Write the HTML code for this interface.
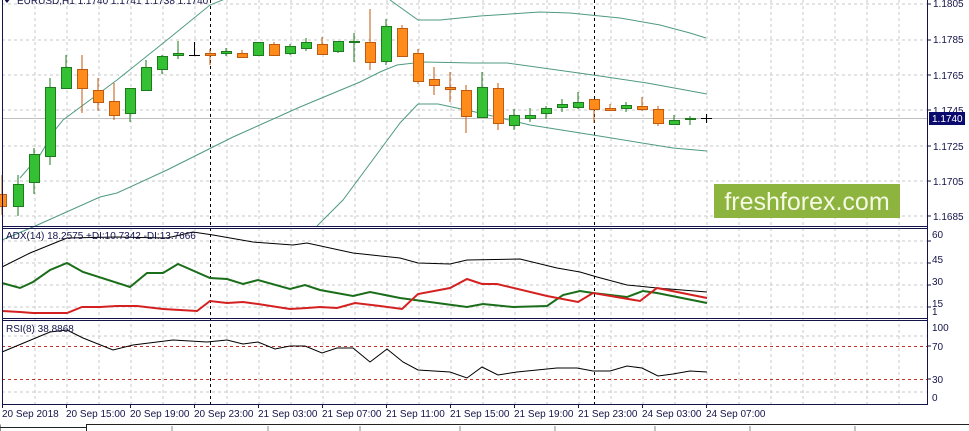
<!DOCTYPE html>
<html><head><meta charset="utf-8"><style>
html,body{margin:0;padding:0;background:#fff;width:969px;height:431px;overflow:hidden}
svg{display:block}
text{font-family:"Liberation Sans",sans-serif;font-size:10px;fill:#14144a}
</style></head><body>
<svg width="969" height="431" viewBox="0 0 969 431" xmlns="http://www.w3.org/2000/svg">
<rect width="969" height="431" fill="#fff"/>
<!-- grid verticals -->
<g stroke="#c8c8c8" stroke-dasharray="3,3" stroke-width="1">
<path d="M35 0V404M67 0V404M99 0V404M131 0V404M163 0V404M195 0V404M227 0V404M259 0V404M291 0V404M323 0V404M355 0V404M387 0V404M419 0V404M451 0V404M483 0V404M515 0V404M547 0V404M579 0V404M611 0V404M643 0V404M675 0V404M707 0V404M739 0V404M771 0V404M803 0V404M835 0V404M867 0V404M899 0V404"/>
<path d="M2 4H927M2 40H927M2 75H927M2 110H927M2 146H927M2 181H927M2 216H927M2 241H927M2 263H927M2 285H927M2 307H927M2 336H927M2 392H927"/>
</g>
<line x1="2" y1="118.5" x2="927" y2="118.5" stroke="#c0c0c0"/>
<!-- RSI levels -->
<g stroke="#c0302a" stroke-dasharray="3,3"><path d="M2 346.5H927M2 379.5H927"/></g>
<!-- vertical black separators -->
<g stroke="#000" stroke-dasharray="3,3"><path d="M210.5 0V404M594.5 0V404"/></g>
<!-- bollinger -->
<g fill="none" stroke="#4f9a80" stroke-width="1">
<polyline points="20,178 40,155 55,130 63,120 117,80 167,40 210,5 230,-3"/>
<polyline points="390,0 418,20 440,20 480,16 540,12 570,13 620,18 660,25 690,33 706,38"/>
<polyline points="2,240 33,227 100,197 117,193 167,170 233,137 300,107 360,82 380,72 397,65 423,62 473,63 507,63 593,75 647,83 707,94"/>
<polyline points="317,226 343,200 400,123 418,104 438,104 480,113 530,125 593,135 673,148 707,151"/>
</g>
<!-- candles -->
<g stroke-width="1">
<g stroke="#1d7a1d" fill="#33c033">
<path d="M18 175V216M34 148V194M50 78V165M66 55V88M130 88V122M146 60V90M162 55V74M178 41V59M226 48V56M258 42V56M290 44V55M306 38V51M338 41V53M354 33V62M386 19V65M482 72V117M514 109V130M530 108V122M546 106V119M562 99V112M578 92V109M626 102V112M674 115V125M690 116V125"/>
<rect x="13.5" y="184.5" width="10" height="22"/><rect x="29.5" y="154.5" width="10" height="28"/><rect x="45.5" y="87.5" width="10" height="69"/><rect x="61.5" y="67.5" width="10" height="21"/><rect x="125.5" y="88.5" width="10" height="25"/><rect x="141.5" y="67.5" width="10" height="23"/><rect x="157.5" y="56.5" width="10" height="13"/><rect x="173.5" y="53.5" width="10" height="2"/><rect x="221.5" y="51.5" width="10" height="2"/><rect x="253.5" y="42.5" width="10" height="13"/><rect x="285.5" y="46.5" width="10" height="7"/><rect x="301.5" y="42.5" width="10" height="6"/><rect x="333.5" y="41.5" width="10" height="10"/><rect x="349.5" y="41.5" width="10" height="1"/><rect x="381.5" y="26.5" width="10" height="35"/><rect x="477.5" y="87.5" width="10" height="30"/><rect x="509.5" y="115.5" width="10" height="10"/><rect x="525.5" y="115.5" width="10" height="3"/><rect x="541.5" y="108.5" width="10" height="5"/><rect x="557.5" y="104.5" width="10" height="3"/><rect x="573.5" y="102.5" width="10" height="5"/><rect x="621.5" y="105.5" width="10" height="3"/><rect x="669.5" y="120.5" width="10" height="4"/><rect x="685.5" y="118.5" width="10" height="1"/>
</g>
<g stroke="#c05a10" fill="#ff8c1a">
<path d="M2 175V215M82 55V113M98 78V111M114 83V120M210 49V65M242 50V58M274 42V56M322 37V55M370 9V70M402 25V57M418 49V84M434 67V95M450 72V102M466 85V133M498 83V130M594 99V123M610 104V111M642 97V111M658 106V126"/>
<rect x="-2.5" y="194.5" width="9" height="12"/><rect x="77.5" y="69.5" width="10" height="19"/><rect x="93.5" y="90.5" width="10" height="12"/><rect x="109.5" y="101.5" width="10" height="14"/><rect x="205.5" y="53.5" width="10" height="2"/><rect x="237.5" y="53.5" width="10" height="4"/><rect x="269.5" y="44.5" width="10" height="11"/><rect x="317.5" y="44.5" width="10" height="10"/><rect x="365.5" y="42.5" width="10" height="20"/><rect x="397.5" y="28.5" width="10" height="28"/><rect x="413.5" y="53.5" width="10" height="28"/><rect x="429.5" y="79.5" width="10" height="6"/><rect x="445.5" y="87.5" width="10" height="2"/><rect x="461.5" y="90.5" width="10" height="26"/><rect x="493.5" y="88.5" width="10" height="35"/><rect x="589.5" y="99.5" width="10" height="10"/><rect x="605.5" y="108.5" width="10" height="2"/><rect x="637.5" y="106.5" width="10" height="3"/><rect x="653.5" y="109.5" width="10" height="14"/>
</g>
<path d="M194.5 42V55.5M189 55.5H200M706.5 114V123M701 118.5H712" stroke="#000"/>
</g>
<!-- logo -->
<rect x="714" y="184" width="186" height="34" fill="#8db43e"/>
<text x="807" y="210" text-anchor="middle" style="font-size:25px;fill:#f6f9e4">freshforex.com</text>
<!-- legend -->
<path d="M3 -2L11 -2L7 3Z" fill="#14144a"/>
<text x="17" y="4">EURUSD,H1  1.1740 1.1741 1.1738 1.1740</text>
<!-- ADX lines -->
<g fill="none">
<polyline stroke="#000" stroke-width="1" points="2,267 30,253 67,238 117,237 167,238 193,232 213,235 253,242 293,245 307,243 353,253 400,258 418,263 450,264 467,260 520,259 557,268 580,272 597,277 627,285 657,288 707,292"/>
<polyline stroke="#1a6e1a" stroke-width="2" points="2,283 20,288 33,282 50,270 67,263 83,272 130,287 147,273 163,273 178,264 210,278 227,279 243,284 258,280 290,289 305,285 320,290 353,296 370,292 400,298 467,307 483,304 513,307 547,306 563,295 580,291 593,293 627,297 643,291 657,293 707,303"/>
<polyline stroke="#d42020" stroke-width="2" points="2,311 20,312 33,313 67,313 82,307 100,307 117,306 137,306 163,309 197,311 210,301 227,303 243,302 258,304 290,309 307,308 320,307 337,308 355,303 380,306 402,309 418,294 450,288 467,279 482,284 497,284 547,296 578,302 593,293 640,301 657,288 707,298"/>
<polyline stroke="#000" stroke-width="1" points="2,352 50,332 67,330 83,338 113,350 133,345 173,340 207,342 227,340 243,344 258,342 275,349 290,346 305,346 322,353 337,348 353,348 370,362 387,349 403,362 418,370 450,372 467,378 482,367 498,375 517,372 557,368 577,368 593,371 610,371 627,366 642,368 658,376 673,374 690,371 707,372"/>
</g>
<text x="6" y="239">ADX(14) 18.2575 +DI:10.7342 -DI:13.7666</text>
<text x="6" y="332">RSI(8) 38.8868</text>
<!-- panel borders -->
<g stroke="#14144a" stroke-width="1" fill="none">
<path d="M2.5 0V404.5H927.5V0"/>
<path d="M2 226.5H927M2 228.5H927M2 318.5H927M2 320.5H927"/>
</g>
<!-- right axis ticks & labels -->
<g stroke="#14144a"><path d="M927 4h4M927 40h4M927 75h4M927 110h4M927 146h4M927 181h4M927 216h4M927 241h4M927 263h4M927 285h4M927 307h4M927 346h4M927 379h4"/></g>
<text x="933" y="7">1.1805</text><text x="933" y="43">1.1785</text><text x="933" y="79">1.1765</text><text x="933" y="114">1.1745</text><text x="933" y="150">1.1725</text><text x="933" y="185">1.1705</text><text x="933" y="220">1.1685</text>
<rect x="929" y="112" width="36" height="13" fill="#0a0a6e"/>
<text x="932" y="122" style="fill:#fff">1.1740</text>
<text x="932" y="238">60</text><text x="932" y="263">45</text><text x="932" y="285">30</text><text x="932" y="307">15</text><text x="932" y="315">1</text>
<text x="932" y="331">100</text><text x="932" y="350">70</text><text x="932" y="383">30</text><text x="932" y="401">0</text>
<!-- time axis -->
<g stroke="#14144a"><path d="M2.5 404v4M66.5 404v4M130.5 404v4M194.5 404v4M258.5 404v4M322.5 404v4M386.5 404v4M450.5 404v4M514.5 404v4M578.5 404v4M642.5 404v4M706.5 404v4"/></g>
<g>
<text x="2" y="417">20 Sep 2018</text><text x="66" y="417">20 Sep 15:00</text><text x="130" y="417">20 Sep 19:00</text><text x="194" y="417">20 Sep 23:00</text><text x="258" y="417">21 Sep 03:00</text><text x="322" y="417">21 Sep 07:00</text><text x="386" y="417">21 Sep 11:00</text><text x="450" y="417">21 Sep 15:00</text><text x="514" y="417">21 Sep 19:00</text><text x="578" y="417">21 Sep 23:00</text><text x="642" y="417">24 Sep 03:00</text><text x="706" y="417">24 Sep 07:00</text>
</g>
<!-- bottom tabs -->
<path d="M0 427.5H86M86.5 431V424.5H969" stroke="#222" fill="none"/>
<path d="M0 424.5V431" stroke="#222"/>
<g stroke="#888"><path d="M172 426v5M268 426v5M360 426v5M460 426v5M555 426v5M655 426v5M750 426v5M855 426v5"/></g>
</svg>
</body></html>
